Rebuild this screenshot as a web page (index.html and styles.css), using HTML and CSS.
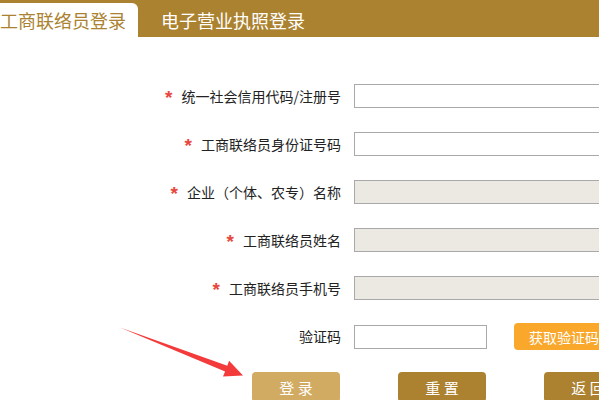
FILE: index.html
```html
<!DOCTYPE html>
<html lang="zh-CN">
<head>
    <meta charset="UTF-8">
    <title>登录</title>
    <link rel="stylesheet" href="styles.css">
</head>
<body>
    <div class="tabs">
        <div class="tab tab-active">工商联络员登录</div>
        <div class="tab">电子营业执照登录</div>
    </div>

    <div class="form">
        <label class="label"><span class="star">*</span>统一社会信用代码/注册号</label>
        <input class="field" type="text">

        <label class="label"><span class="star">*</span>工商联络员身份证号码</label>
        <input class="field" type="text">

        <label class="label"><span class="star">*</span>企业（个体、农专）名称</label>
        <input class="field" type="text" disabled>

        <label class="label"><span class="star">*</span>工商联络员姓名</label>
        <input class="field" type="text" disabled>

        <label class="label"><span class="star">*</span>工商联络员手机号</label>
        <input class="field" type="text" disabled>

        <label class="label">验证码</label>
        <div class="code-row">
            <input class="field code" type="text">
            <button class="btn btn-code" type="button">获取验证码</button>
        </div>
    </div>

    <div class="actions">
        <button class="btn btn-login" type="button">登 录</button>
        <button class="btn btn-dark" type="button">重 置</button>
        <button class="btn btn-dark" type="button">返 回</button>
    </div>

    <!-- red pointer drawn over the page -->
    <svg class="arrow" width="599" height="400" viewBox="0 0 599 400">
        <polygon points="120,327.5 227.3,365.8 229.1,360.8 243,375.5 223,376.4 225.1,371.4" fill="#f43b3b"/>
    </svg>
</body>
</html>
```

FILE: styles.css
```css
html, body {
    margin: 0;
    padding: 0;
    background: #fff;
}

body {
    position: relative;
    width: 599px;
    height: 400px;
    overflow: hidden;
    font-family: "Noto Sans CJK SC", "DejaVu Sans", sans-serif;
    color: #222;
}

.tabs {
    display: flex;
    align-items: flex-end;
    height: 37px;
    background: #ab8230;
    width: 800px;
}

.tab {
    height: 34px;
    line-height: 34px;
    font-size: 18px;
    color: #fff;
    margin-left: 23px;
    white-space: nowrap;
}

.tab-active {
    margin-left: 0;
    padding-right: 12px;
    background: #fff;
    color: #ab8230;
    border-top-right-radius: 6px;
}

.form {
    display: grid;
    grid-template-columns: 341px 260px;
    column-gap: 13px;
    row-gap: 24px;
    grid-auto-rows: 24px;
    margin-top: 47px;
    width: 800px;
}

.label {
    display: flex;
    align-items: center;
    justify-content: flex-end;
    font-size: 14px;
    line-height: 24px;
    white-space: nowrap;
}

.star {
    color: #e8473e;
    font-family: "Liberation Sans", sans-serif;
    font-weight: bold;
    font-size: 19px;
    line-height: 24px;
    margin-right: 9px;
    margin-top: 3px;
}

.field {
    box-sizing: border-box;
    height: 24px;
    width: 260px;
    margin: 0;
    padding: 0 4px;
    border: 1px solid #a9a9a9;
    background: #fff;
}

.field:disabled {
    background: #ebe9e1;
}

.code-row {
    display: flex;
    align-items: center;
    gap: 27px;
    margin-top: 1px;
}

.code {
    width: 133px;
}

.btn {
    border: 0;
    border-radius: 4px;
    color: #fff;
    font-family: "Noto Sans CJK SC", sans-serif;
    padding: 0;
    flex-shrink: 0;
}

.btn-code {
    width: 100px;
    height: 27px;
    font-size: 14px;
    background: #f9a82c;
}

.actions {
    display: flex;
    gap: 58px;
    margin-top: 24px;
    margin-left: 252px;
    width: 600px;
}

.actions .btn {
    width: 88px;
    height: 30px;
    font-size: 15px;
}

.btn-login {
    background: #d2ab63;
}

.btn-dark {
    background: #ac8231;
}

.arrow {
    position: absolute;
    left: 0;
    top: 0;
    pointer-events: none;
}
```
